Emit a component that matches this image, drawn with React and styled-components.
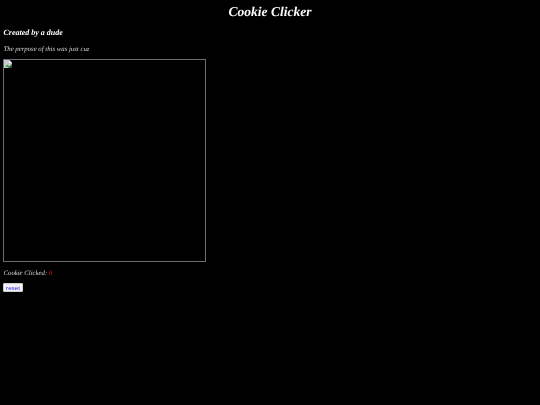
import React from "react";
import styled, { createGlobalStyle } from "styled-components";

const GlobalStyle = createGlobalStyle`
  html, body {
    margin: 0;
    background-color: #000;
  }
`;

const Page = styled.div`
  height: 405px;
  overflow: hidden;
  padding: 0 3px;
  box-sizing: border-box;
  color: #fff;
  font-family: "Liberation Serif", "Times New Roman", serif;
  font-style: italic;
  text-rendering: geometricPrecision;
  will-change: transform;
`;

const Title = styled.h1`
  margin: 0;
  padding-top: 3px;
  height: 19px;
  font-size: 13.5px;
  line-height: 17px;
  text-align: center;
`;

const Heading = styled.h3`
  margin: 5px 0 0;
  padding-left: 0.5px;
  height: 12px;
  font-size: 8px;
  line-height: 12px;
`;

const Purpose = styled.p`
  margin: 6px 0 0;
  padding-left: 0.5px;
  height: 9px;
  font-size: 6.75px;
  line-height: 9px;
  color: #d8d8d8;
`;

const CookieFrame = styled.div`
  margin-top: 5px;
  width: 203px;
  height: 203px;
  box-sizing: border-box;
  border: 1px solid #6e6e6e;
`;

const BrokenIcon = styled.svg`
  display: block;
  width: 8px;
  height: 8px;
`;

const Counter = styled.p`
  margin: 6.5px 0 0;
  padding-left: 0.5px;
  height: 9px;
  font-size: 6.75px;
  line-height: 9px;
  color: #d8d8d8;
`;

const Count = styled.span`
  color: #e01010;
`;

const ResetButton = styled.button`
  display: block;
  margin: 5.5px 0 0;
  padding: 0;
  width: 20px;
  height: 9px;
  border: 1px solid #ccc;
  border-radius: 1px;
  background-color: #f2f0fa;
  color: #2a2ad8;
  font-family: "Liberation Sans", Arial, sans-serif;
  font-size: 6.25px;
  line-height: 7px;
`;

const App = () => {
  return (
    <Page>
      <GlobalStyle />
      <Title>Cookie Clicker</Title>
      <Heading>Created by a dude</Heading>
      <Purpose>The perpose of this was just cuz</Purpose>
      <CookieFrame>
        <BrokenIcon viewBox="0 0 8 8">
          <path d="M0 0H5L8 3V8H0Z" fill="#c4cad0" />
          <path d="M5 0L8 3H5Z" fill="#ffffff" />
          <path d="M1 7L3.5 4.5L6 7Z" fill="#4d9a4f" />
          <path d="M4 8L8 4V8Z" fill="#1f5a2a" />
        </BrokenIcon>
      </CookieFrame>
      <Counter>
        Cookie Clicked: <Count>0</Count>
      </Counter>
      <ResetButton>reset</ResetButton>
    </Page>
  );
};

export default App;
